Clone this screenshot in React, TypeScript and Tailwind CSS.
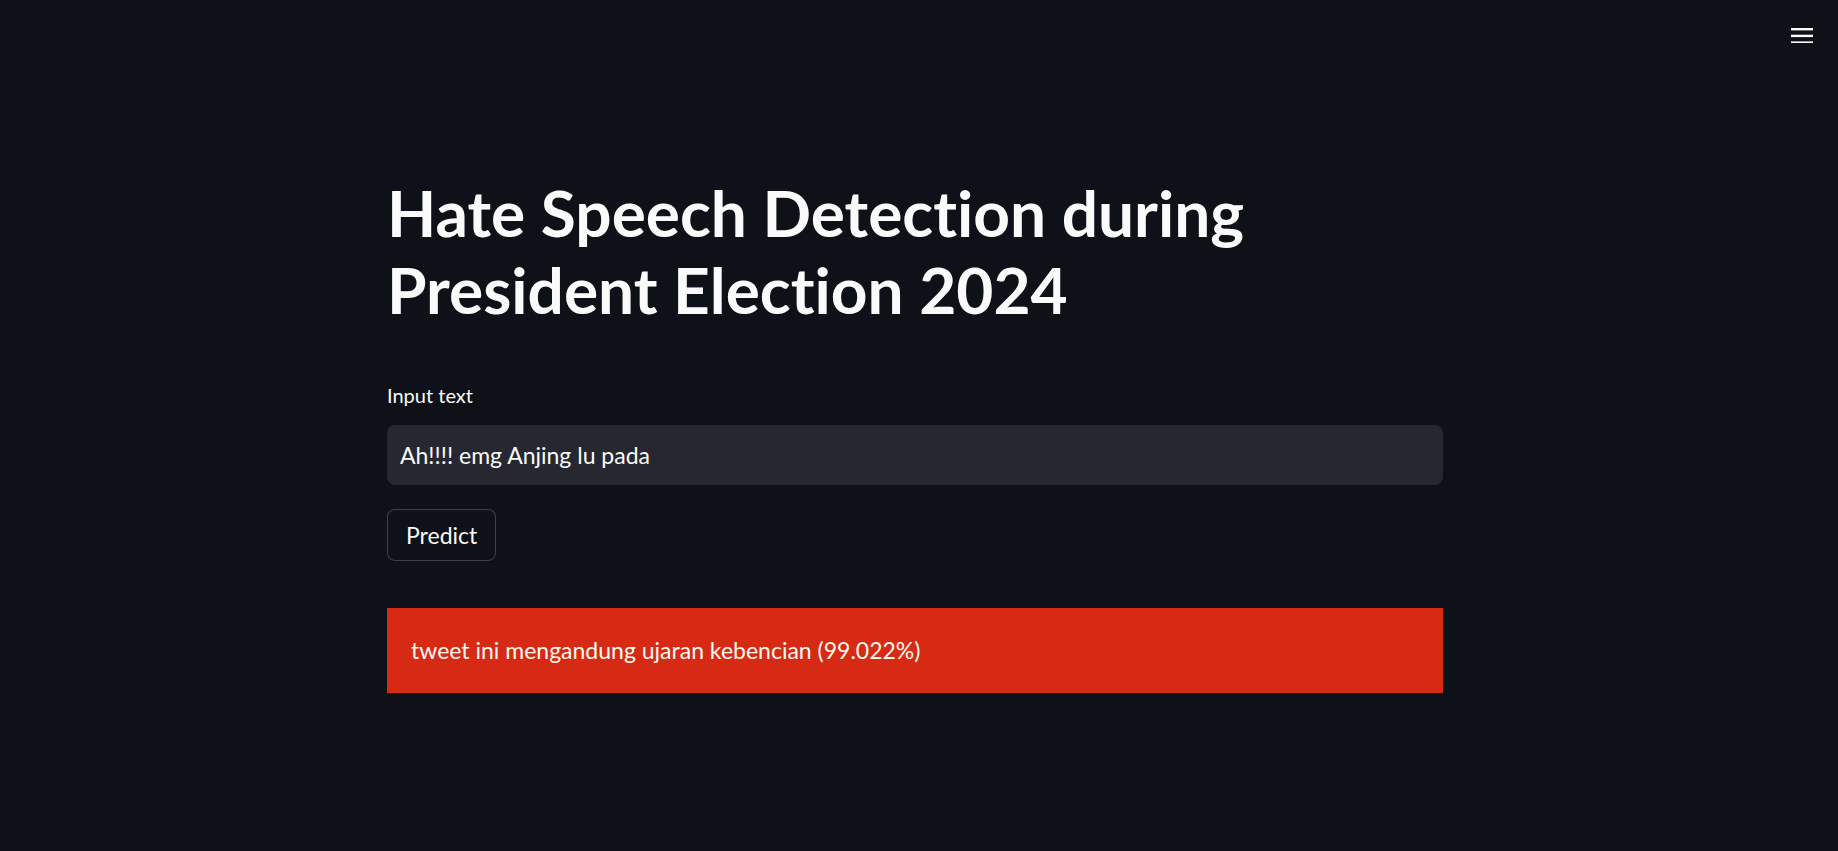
import React from 'react';

const font = { fontFamily: 'Lato, "Noto Sans", sans-serif' };

const App = () => {
  return (
    <div
      className="min-h-screen bg-[#0e1117] text-[#fafafa] relative pr-[8px] [font-variant-ligatures:none]"
      style={font}
    >
      {/* top-right menu */}
      <button className="absolute top-[19px] right-[20px] p-[4px] text-[#fafafa]">
        <svg width="24" height="20" viewBox="0 0 24 20">
          <rect x="1" y="5" width="22" height="2.4" fill="currentColor" />
          <rect x="1" y="11.7" width="22" height="2.4" fill="currentColor" />
          <rect x="1" y="18.4" width="22" height="2.4" fill="currentColor" />
        </svg>
      </button>

      <main className="mx-auto w-[1056px] pt-[174px] pb-20">
        <h1 className="text-[64px] leading-[77px] font-bold">
          Hate Speech Detection during
          <br />
          President Election 2024
        </h1>

        <div className="mt-[52px]">
          <label className="block text-[20px] leading-[30px] mb-[15px]">Input text</label>
          <div className="h-[60px] bg-[#262730] rounded-lg flex items-center px-[13px]">
            <span className="text-[23px]">Ah!!!! emg Anjing lu pada</span>
          </div>
        </div>

        <button className="mt-[24px] h-[52px] px-[18px] rounded-lg border border-[#fafafa]/20 bg-[#0e1117] text-[23px]">
          Predict
        </button>

        <div className="mt-[47px] h-[85px] bg-[#d62a15] flex items-center px-[24px]">
          <span className="text-[23px] text-[#fff8ee]">tweet ini mengandung ujaran kebencian (99.022%)</span>
        </div>
      </main>
    </div>
  );
};

export default App;
